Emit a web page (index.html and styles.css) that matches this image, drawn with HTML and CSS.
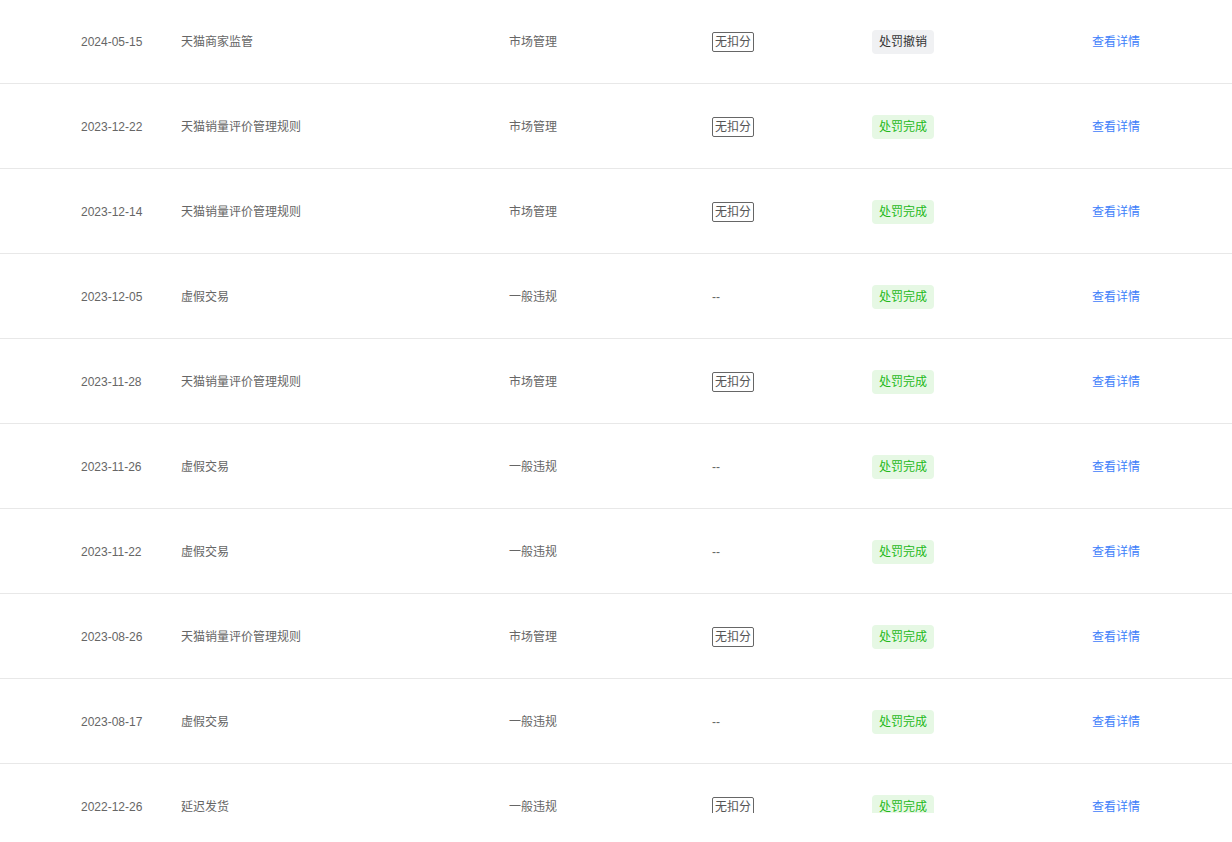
FILE: index.html
```html
<!DOCTYPE html>
<html lang="zh-CN">
  <head>
    <meta charset="UTF-8" />
    <meta name="viewport" content="width=device-width, initial-scale=1.0" />
    <title>违规记录</title>
    <link rel="stylesheet" href="styles.css">
  </head>
  <body>
    <div class="records">
      <div class="row">
        <span class="date">2024-05-15</span>
        <span class="name">天猫商家监管</span>
        <span class="type">市场管理</span>
        <span class="score"><em class="no-score">无扣分</em></span>
        <span class="status"><em class="tag tag-revoked">处罚撤销</em></span>
        <a class="detail" href="#">查看详情</a>
      </div>
      <div class="row">
        <span class="date">2023-12-22</span>
        <span class="name">天猫销量评价管理规则</span>
        <span class="type">市场管理</span>
        <span class="score"><em class="no-score">无扣分</em></span>
        <span class="status"><em class="tag tag-done">处罚完成</em></span>
        <a class="detail" href="#">查看详情</a>
      </div>
      <div class="row">
        <span class="date">2023-12-14</span>
        <span class="name">天猫销量评价管理规则</span>
        <span class="type">市场管理</span>
        <span class="score"><em class="no-score">无扣分</em></span>
        <span class="status"><em class="tag tag-done">处罚完成</em></span>
        <a class="detail" href="#">查看详情</a>
      </div>
      <div class="row">
        <span class="date">2023-12-05</span>
        <span class="name">虚假交易</span>
        <span class="type">一般违规</span>
        <span class="score">--</span>
        <span class="status"><em class="tag tag-done">处罚完成</em></span>
        <a class="detail" href="#">查看详情</a>
      </div>
      <div class="row">
        <span class="date">2023-11-28</span>
        <span class="name">天猫销量评价管理规则</span>
        <span class="type">市场管理</span>
        <span class="score"><em class="no-score">无扣分</em></span>
        <span class="status"><em class="tag tag-done">处罚完成</em></span>
        <a class="detail" href="#">查看详情</a>
      </div>
      <div class="row">
        <span class="date">2023-11-26</span>
        <span class="name">虚假交易</span>
        <span class="type">一般违规</span>
        <span class="score">--</span>
        <span class="status"><em class="tag tag-done">处罚完成</em></span>
        <a class="detail" href="#">查看详情</a>
      </div>
      <div class="row">
        <span class="date">2023-11-22</span>
        <span class="name">虚假交易</span>
        <span class="type">一般违规</span>
        <span class="score">--</span>
        <span class="status"><em class="tag tag-done">处罚完成</em></span>
        <a class="detail" href="#">查看详情</a>
      </div>
      <div class="row">
        <span class="date">2023-08-26</span>
        <span class="name">天猫销量评价管理规则</span>
        <span class="type">市场管理</span>
        <span class="score"><em class="no-score">无扣分</em></span>
        <span class="status"><em class="tag tag-done">处罚完成</em></span>
        <a class="detail" href="#">查看详情</a>
      </div>
      <div class="row">
        <span class="date">2023-08-17</span>
        <span class="name">虚假交易</span>
        <span class="type">一般违规</span>
        <span class="score">--</span>
        <span class="status"><em class="tag tag-done">处罚完成</em></span>
        <a class="detail" href="#">查看详情</a>
      </div>
      <div class="row">
        <span class="date">2022-12-26</span>
        <span class="name">延迟发货</span>
        <span class="type">一般违规</span>
        <span class="score"><em class="no-score">无扣分</em></span>
        <span class="status"><em class="tag tag-done">处罚完成</em></span>
        <a class="detail" href="#">查看详情</a>
      </div>
    </div>
  </body>
</html>
```

FILE: styles.css
```css
* {
  padding: 0;
  margin: 0;
  box-sizing: border-box;
}
body {
  background-color: #fff;
  font-family: "Liberation Sans", Arial, "Noto Sans CJK SC", sans-serif;
  font-size: 12px;
  color: #666;
}
.records {
  margin-top: -1px;
  height: 814px;
  overflow: hidden;
}
.row {
  display: grid;
  grid-template-columns: 100px 328px 203px 160px 220px 1fr;
  align-items: center;
  height: 85px;
  padding-top: 2px;
  padding-left: 81px;
  border-bottom: 1px solid #e8e8e8;
  line-height: 18px;
}
.row em {
  font-style: normal;
}
.no-score {
  display: inline-block;
  padding: 0 2px;
  border: 1px solid #666;
  border-radius: 2px;
  line-height: 18px;
  color: #555;
}
.tag {
  display: inline-block;
  padding: 3px 7px;
  border-radius: 4px;
  line-height: 18px;
}
.tag-revoked {
  background-color: #f0f1f3;
  color: #333;
}
.tag-done {
  background-color: #e6f8e4;
  color: #1fb820;
}
.detail {
  color: #4080fa;
  text-decoration: none;
}
```
